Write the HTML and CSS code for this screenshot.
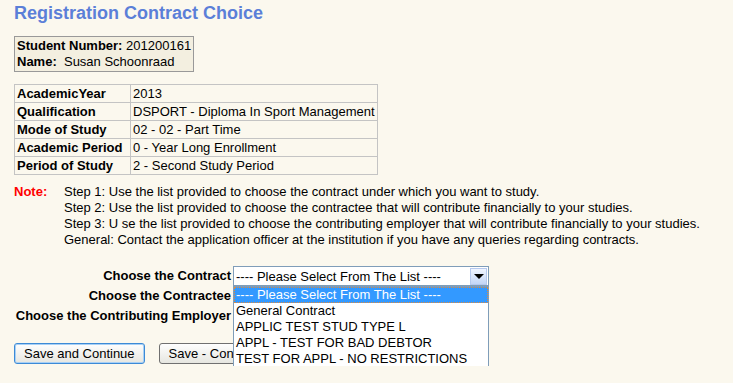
FILE: index.html
```html
<!DOCTYPE html>
<html lang="en">
  <head>
    <meta charset="UTF-8" />
    <title>Registration Contract Choice</title>
    <link rel="stylesheet" href="styles.css">
  </head>
  <body>
    <div class="page">
      <h1>Registration Contract Choice</h1>

      <div class="student-box">
        <div><b>Student Number:</b> 201200161</div>
        <div><b>Name:</b>&nbsp; Susan Schoonraad</div>
      </div>

      <table class="details">
        <tr><th>AcademicYear</th><td>2013</td></tr>
        <tr><th>Qualification</th><td>DSPORT - Diploma In Sport Management</td></tr>
        <tr><th>Mode of Study</th><td>02 - 02 - Part Time</td></tr>
        <tr><th>Academic Period</th><td>0 - Year Long Enrollment</td></tr>
        <tr><th>Period of Study</th><td>2 - Second Study Period</td></tr>
      </table>

      <div class="note">
        <div class="note-label">Note:</div>
        <div class="note-lines">
          <div>Step 1: Use the list provided to choose the contract under which you want to study.</div>
          <div>Step 2: Use the list provided to choose the contractee that will contribute financially to your studies.</div>
          <div>Step 3: U se the list provided to choose the contributing employer that will contribute financially to your studies.</div>
          <div>General: Contact the application officer at the institution if you have any queries regarding contracts.</div>
        </div>
      </div>

      <div class="choices">
        <div class="choice-label">Choose the Contract</div>
        <div class="choice-field">
          <div class="select">
            <span class="select-text">---- Please Select From The List ----</span>
            <span class="select-arrow"></span>
            <ul class="dropdown">
              <li class="selected">---- Please Select From The List ----</li>
              <li>General Contract</li>
              <li>APPLIC TEST STUD TYPE L</li>
              <li>APPL - TEST FOR BAD DEBTOR</li>
              <li>TEST FOR APPL - NO RESTRICTIONS</li>
            </ul>
          </div>
        </div>
        <div class="choice-label">Choose the Contractee</div>
        <div class="choice-field"></div>
        <div class="choice-label">Choose the Contributing Employer</div>
        <div class="choice-field"></div>
      </div>

      <div class="buttons">
        <button class="btn btn-primary">Save and Continue</button>
        <button class="btn">Save - Continue Later</button>
      </div>
    </div>
  </body>
</html>
```

FILE: styles.css
```css
body {
  margin: 0;
  background-color: #fbf8ee;
  font-family: 'Liberation Sans', Arial, sans-serif;
  font-size: 13px;
  color: #000;
}

.page {
  padding: 2px 14px;
}

h1 {
  margin: 0 0 12px 0;
  font-size: 18px;
  line-height: 22px;
  color: #5b7fd8;
}

.student-box {
  display: inline-block;
  border: 1px solid #999;
  background-color: #f3efe0;
  padding: 1px 2px;
  line-height: 16px;
}

.details {
  margin-top: 12px;
  border-collapse: collapse;
  border: 1px solid #a8a8a8;
}

.details th,
.details td {
  border: 1px solid #c4c4c4;
  padding: 1px 2px;
  line-height: 15px;
  text-align: left;
  white-space: nowrap;
}

.details th {
  width: 111px;
}

.note {
  display: flex;
  margin-top: 9px;
  line-height: 16px;
}

.note-label {
  width: 50px;
  color: #ff0000;
  font-weight: bold;
}

.choices {
  display: grid;
  grid-template-columns: 219px 260px;
  grid-auto-rows: 20px;
  margin-top: 18px;
}

.choice-label {
  text-align: right;
  font-weight: bold;
  padding-right: 2px;
  line-height: 20px;
}

.select {
  position: relative;
  width: 254px;
  height: 18px;
  border: 1px solid #7f9db9;
  background-color: white;
  display: flex;
  align-items: center;
}

.select-text {
  flex: 1;
  padding-left: 2px;
}

.select-arrow {
  width: 15px;
  height: 15px;
  margin-right: 1px;
  border: 1px solid #b6c9ee;
  background: linear-gradient(#f0f5ff, #c3d6f7);
  position: relative;
}

.select-arrow::after {
  content: '';
  position: absolute;
  left: 3px;
  top: 5px;
  border-left: 5px solid transparent;
  border-right: 5px solid transparent;
  border-top: 5px solid #000;
}

.dropdown {
  position: absolute;
  left: -1px;
  top: 19px;
  width: 254px;
  margin: 0;
  padding: 0;
  list-style: none;
  background-color: white;
  border: 1px solid #7f9db9;
  z-index: 2;
}

.dropdown li {
  height: 16px;
  line-height: 16px;
  padding-left: 2px;
  white-space: nowrap;
}

.dropdown li.selected {
  background-color: #3399ff;
  color: white;
  outline: 1px dotted #e08a3c;
  outline-offset: -1px;
}

.buttons {
  display: flex;
  gap: 14px;
  margin-top: 17px;
}

.btn {
  font-family: 'Liberation Sans', Arial, sans-serif;
  font-size: 13px;
  height: 21px;
  padding: 0 9px;
  border: 1px solid #707070;
  border-radius: 3px;
  background: linear-gradient(#fefefe, #e6e6e0);
  color: #000;
}

.btn-primary {
  border-color: #3c8ad6;
  box-shadow: inset 0 0 0 1px #a8d0f5;
}
```
